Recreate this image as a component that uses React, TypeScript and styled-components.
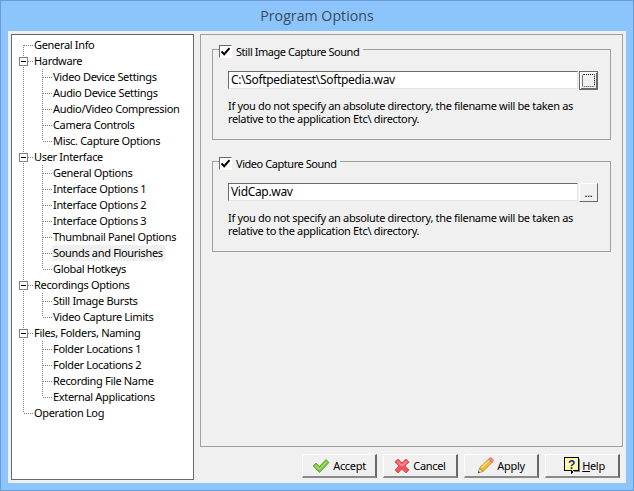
import React from "react";
import styled, { createGlobalStyle } from "styled-components";

const GlobalStyle = createGlobalStyle`
  html, body {
    margin: 0;
    padding: 0;
  }
  body {
    font-family: "Noto Sans", Tahoma, sans-serif;
    font-size: 11px;
    letter-spacing: -0.33px;
    color: #000;
  }
`;

const Frame = styled.div`
  box-sizing: border-box;
  width: 634px;
  height: 491px;
  display: flex;
  flex-direction: column;
  background: #8cc5fb;
  border: 1px solid #6b9bd0;
  padding: 0 7px 7px;
`;

const TitleBar = styled.div`
  box-sizing: border-box;
  height: 30px;
  flex: none;
  display: flex;
  align-items: center;
  justify-content: center;
  padding-bottom: 2px;
  font-family: "Open Sans", sans-serif;
  font-size: 14.2px;
  letter-spacing: 0;
  color: #3b4a5e;
`;

const Client = styled.div`
  flex: 1;
  display: flex;
  gap: 6px;
  padding: 3px;
  background: #f0f0f0;
`;

const TreePane = styled.div`
  box-sizing: border-box;
  width: 183px;
  flex: none;
  background: #fff;
  border: 1px solid #696969;
  padding-top: 2px;
`;

const Row = styled.div`
  display: flex;
  height: 16px;
`;

const Gutter = styled.svg`
  flex: none;
  height: 16px;
  display: block;
`;

const RowLabel = styled.span<{ $selected?: boolean }>`
  line-height: 15px;
  height: 16px;
  padding: 0 2px 0 1px;
  white-space: nowrap;
  background: ${(p) => (p.$selected ? "#f0f0f0" : "transparent")};
`;

const RightColumn = styled.div`
  flex: 1;
  display: flex;
  flex-direction: column;
  gap: 7px;
`;

const OptionsPanel = styled.div`
  box-sizing: border-box;
  height: 413px;
  display: flex;
  flex-direction: column;
  gap: 21px;
  padding: 14px 11px 0;
  border: 1px solid #a0a0a0;
`;

const Group = styled.div`
  position: relative;
  box-sizing: border-box;
  width: 399px;
  height: 91px;
  padding: 21px 12px 0 15px;
  border: 1px solid #a0a0a0;
`;

const Legend = styled.label`
  position: absolute;
  top: -5px;
  left: 6px;
  display: flex;
  align-items: center;
  gap: 4px;
  height: 13px;
  padding-right: 4px;
  background: #f0f0f0;
  letter-spacing: -0.45px;
`;

const CheckBox = styled.span`
  box-sizing: border-box;
  width: 13px;
  height: 13px;
  background: #fff;
  border-style: solid;
  border-width: 1px;
  border-color: #696969 #fff #fff #696969;
  display: flex;
  align-items: center;
  justify-content: center;
`;

const PathRow = styled.div`
  display: flex;
  gap: 1px;
  height: 19px;
`;

const PathInput = styled.div`
  box-sizing: border-box;
  width: 350px;
  height: 18px;
  padding: 0 0 0 2px;
  font-size: 12px;
  line-height: 15px;
  background: #fff;
  border-style: solid;
  border-width: 1px;
  border-color: #696969 #e3e3e3 #e3e3e3 #696969;
`;

const BrowseButton = styled.div<{ $focused?: boolean }>`
  box-sizing: border-box;
  width: 19px;
  height: 19px;
  display: flex;
  align-items: center;
  justify-content: center;
  background: #f0f0f0;
  border-style: solid;
  border-width: 1px;
  border-color: ${(p) => (p.$focused ? "#696969" : "#fff #696969 #696969 #fff")};
  box-shadow: ${(p) => (p.$focused ? "inset 1px 1px #fff, inset -1px -1px #696969" : "none")};
  line-height: 13px;
`;

const FocusRing = styled.span`
  box-sizing: border-box;
  width: 13px;
  height: 13px;
  border: 1px dotted #000;
  border-bottom-color: #403050;
  border-radius: 2px;
`;

const Hint = styled.p`
  margin: 9px 0 0;
  width: 365px;
  line-height: 13px;
`;

const ButtonBar = styled.div`
  display: flex;
  justify-content: flex-end;
  gap: 6px;
  padding-right: 3px;
`;

const DialogButton = styled.div`
  box-sizing: border-box;
  width: 75px;
  height: 24px;
  display: flex;
  align-items: center;
  justify-content: center;
  gap: 3px;
  background: #f0f0f0;
  border-style: solid;
  border-width: 1px 2px 2px 1px;
  border-color: #fff #696969 #8a8a8a #fff;
`;

const HelpButton = styled(DialogButton)`
  gap: 1px;
  padding-left: 4px;
`;

const Underlined = styled.span`
  text-decoration: underline;
`;

type TreeItem = {
  label: string;
  level: 0 | 1;
  expandable?: boolean;
  lastChild?: boolean;
  selected?: boolean;
};

const items: TreeItem[] = [
  { label: "General Info", level: 0 },
  { label: "Hardware", level: 0, expandable: true },
  { label: "Video Device Settings", level: 1 },
  { label: "Audio Device Settings", level: 1 },
  { label: "Audio/Video Compression", level: 1 },
  { label: "Camera Controls", level: 1 },
  { label: "Misc. Capture Options", level: 1, lastChild: true },
  { label: "User Interface", level: 0, expandable: true },
  { label: "General Options", level: 1 },
  { label: "Interface Options 1", level: 1 },
  { label: "Interface Options 2", level: 1 },
  { label: "Interface Options 3", level: 1 },
  { label: "Thumbnail Panel Options", level: 1 },
  { label: "Sounds and Flourishes", level: 1, selected: true },
  { label: "Global Hotkeys", level: 1, lastChild: true },
  { label: "Recordings Options", level: 0, expandable: true },
  { label: "Still Image Bursts", level: 1 },
  { label: "Video Capture Limits", level: 1, lastChild: true },
  { label: "Files, Folders, Naming", level: 0, expandable: true },
  { label: "Folder Locations 1", level: 1 },
  { label: "Folder Locations 2", level: 1 },
  { label: "Recording File Name", level: 1 },
  { label: "External Applications", level: 1, lastChild: true },
  { label: "Operation Log", level: 0 },
];

const DOTS = { stroke: "#808080", strokeDasharray: "1 1", shapeRendering: "crispEdges" as const };

// connector lines for one row, coordinates are from the tree pane's inner left edge
const TreeLines: React.FC<{ item: TreeItem; first: boolean; last: boolean }> = ({ item, first, last }) => {
  const width = item.level === 0 ? 21 : 40;
  return (
    <Gutter width={width} viewBox={`0 0 ${width} 16`}>
      <line x1="11.5" x2="11.5" y1={first ? 8 : 0} y2={last ? 8 : 16} {...DOTS} />
      {item.level === 0 && <line x1="12" x2="21" y1="8.5" y2="8.5" {...DOTS} />}
      {item.level === 1 && (
        <>
          <line x1="30.5" x2="30.5" y1="0" y2={item.lastChild ? 8 : 16} {...DOTS} />
          <line x1="31" x2="40" y1="8.5" y2="8.5" {...DOTS} />
        </>
      )}
      {item.expandable && (
        <g shapeRendering="crispEdges">
          <rect x="7.5" y="4.5" width="8" height="8" fill="#fff" stroke="#808080" />
          <line x1="9" x2="14" y1="8.5" y2="8.5" stroke="#000" />
        </g>
      )}
    </Gutter>
  );
};

const CheckMark = () => (
  <svg width="11" height="11" viewBox="0 0 11 11">
    <path d="M1.5 5.5 L4.2 8.2 L9.5 2.2" fill="none" stroke="#000" strokeWidth="2" />
  </svg>
);

const AcceptIcon = () => (
  <svg width="18" height="16" viewBox="0 0 18 16">
    <path d="M1 8 L4 5 L7.5 8.5 L14 1.5 L17 4.5 L7.5 14.5 Z" fill="#7ac143" stroke="#5c9e2e" strokeWidth="0.8" />
    <path d="M3 8 L4 7 L7.5 10.5 L14 3.5 L15 4.5 L7.5 12 Z" fill="#a9e06c" />
  </svg>
);

const CancelIcon = () => (
  <svg width="16" height="16" viewBox="0 0 16 16">
    <path
      d="M1 4 L4 1 L8 5 L12 1 L15 4 L11 8 L15 12 L12 15 L8 11 L4 15 L1 12 L5 8 Z"
      fill="#f0555a"
      stroke="#d84045"
      strokeWidth="0.8"
      strokeLinejoin="round"
    />
    <path d="M3 4 L4 3 L8 7 L12 3 L13 4 L9 8 L8 8 L7 8 Z" fill="#f99a9c" />
  </svg>
);

const ApplyIcon = () => (
  <svg width="17" height="17" viewBox="0 0 17 17">
    <path d="M1 16 L2.5 11 L6 14.5 Z" fill="#f0d9a8" stroke="#8a7a55" strokeWidth="0.6" />
    <path d="M1 16 L1.6 14 L3 15.4 Z" fill="#333" />
    <path d="M2.5 11 L11.5 2 L15 5.5 L6 14.5 Z" fill="#f5b72e" stroke="#b58420" strokeWidth="0.7" />
    <path d="M4 10.5 L12 2.8 L13 3.8 L5 11.5 Z" fill="#fde08a" />
    <path d="M11.5 2 L13 0.8 Q14 0.4 14.8 1.2 L16 2.4 Q16.6 3.2 16.2 4 L15 5.5 Z" fill="#f08a94" stroke="#b85a64" strokeWidth="0.6" />
  </svg>
);

const HelpIcon = () => (
  <svg width="18" height="19" viewBox="0 0 18 19">
    <path
      d="M1.5 1.5 H15.5 V14.5 H10.5 L8.5 17.5 V14.5 H1.5 Z"
      fill="#ffffa0"
      stroke="#000"
      shapeRendering="crispEdges"
    />
    <path d="M16.5 3 V15.5 H11 " fill="none" stroke="#808080" shapeRendering="crispEdges" />
    <text x="8.5" y="12.5" textAnchor="middle" fontFamily="Liberation Sans, sans-serif" fontWeight="700" fontSize="12" fill="#2020a0">
      ?
    </text>
  </svg>
);

const HINT =
  "If you do not specify an absolute directory, the filename will be taken as relative to the application Etc\\ directory.";

export default function App() {
  return (
    <>
      <GlobalStyle />
      <Frame>
        <TitleBar>Program Options</TitleBar>
        <Client>
          <TreePane>
            {items.map((item, i) => (
              <Row key={item.label}>
                <TreeLines item={item} first={i === 0} last={i === items.length - 1} />
                <RowLabel $selected={item.selected}>{item.label}</RowLabel>
              </Row>
            ))}
          </TreePane>
          <RightColumn>
            <OptionsPanel>
              <Group>
                <Legend>
                  <CheckBox>
                    <CheckMark />
                  </CheckBox>
                  Still Image Capture Sound
                </Legend>
                <PathRow>
                  <PathInput>C:\Softpediatest\Softpedia.wav</PathInput>
                  <BrowseButton $focused>
                    <FocusRing />
                  </BrowseButton>
                </PathRow>
                <Hint>{HINT}</Hint>
              </Group>
              <Group>
                <Legend>
                  <CheckBox>
                    <CheckMark />
                  </CheckBox>
                  Video Capture Sound
                </Legend>
                <PathRow>
                  <PathInput>VidCap.wav</PathInput>
                  <BrowseButton>...</BrowseButton>
                </PathRow>
                <Hint>{HINT}</Hint>
              </Group>
            </OptionsPanel>
            <ButtonBar>
              <DialogButton>
                <AcceptIcon />
                Accept
              </DialogButton>
              <DialogButton>
                <CancelIcon />
                Cancel
              </DialogButton>
              <DialogButton>
                <ApplyIcon />
                Apply
              </DialogButton>
              <HelpButton>
                <HelpIcon />
                <span>
                  <Underlined>H</Underlined>elp
                </span>
              </HelpButton>
            </ButtonBar>
          </RightColumn>
        </Client>
      </Frame>
    </>
  );
}
